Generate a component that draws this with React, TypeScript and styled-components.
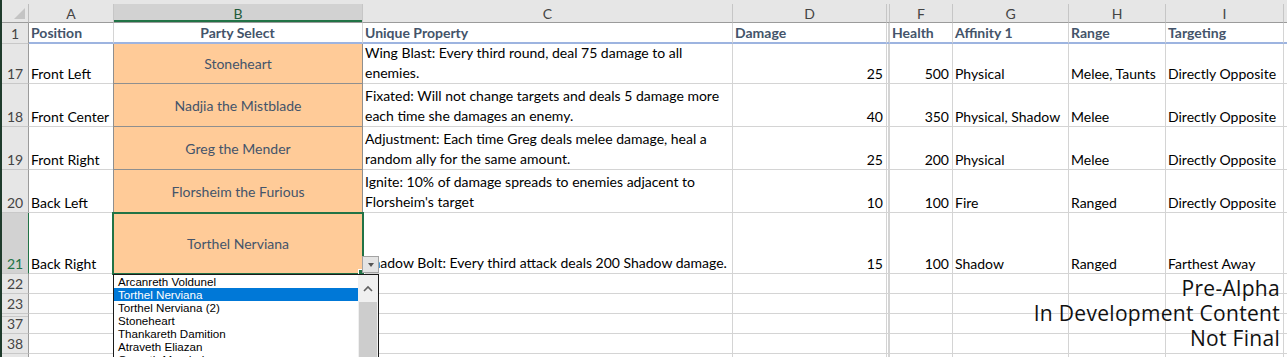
import React from "react";
import styled, { createGlobalStyle, css } from "styled-components";

const GlobalStyle = createGlobalStyle`
  html, body {
    margin: 0;
    padding: 0;
    background: #ffffff;
    overflow: hidden;
  }
  body {
    font-family: Lato, "Liberation Sans", sans-serif;
  }
`;

const GRID = "#d4d4d4";
const HEAD_BG = "#e6e6e6";
const HEAD_SEL = "#d2d2d2";
const GREEN = "#217346";
const PEACH = "#ffcb98";
const PEACH_LINE = "#8f8f8f";

const Sheet = styled.div`
  position: relative;
  width: 1285px;
  height: 357px;
  overflow: hidden;
  border-left: 2px solid #1f3b2c;
  display: grid;
  grid-template-columns: 27px 85px 249px 370px 154px 3px 63px 116px 97px 118px 1fr;
  grid-template-rows: 4px 19px 21px 40px 43px 43px 43px 61px 20px 20px 20px 20px 20px;
  font-size: 14px;
  color: #000;
`;

const TopStrip = styled.div`
  grid-column: 1 / -1;
  background: ${HEAD_BG};
`;

const Corner = styled.div`
  position: relative;
  background: ${HEAD_BG};
  border-right: 1px solid #bdbdbd;
  border-bottom: 1px solid #9b9b9b;
  &::after {
    content: "";
    position: absolute;
    right: 3px;
    bottom: 3px;
    border-style: solid;
    border-width: 0 0 11px 11px;
    border-color: transparent transparent #c4c4c4 transparent;
  }
`;

const ColHead = styled.div<{ $sel?: boolean }>`
  display: flex;
  align-items: center;
  justify-content: center;
  background: ${(p) => (p.$sel ? HEAD_SEL : HEAD_BG)};
  border-right: 1px solid #c6c6c6;
  border-bottom: 1px solid #9b9b9b;
  color: ${(p) => (p.$sel ? "#1f5b3a" : "#444444")};
  font-size: 14px;
  ${(p) =>
    p.$sel &&
    css`
      box-shadow: inset 0 -2px 0 ${GREEN};
    `}
`;

const RowHead = styled.div<{ $sel?: boolean; $gap?: boolean }>`
  display: flex;
  align-items: flex-end;
  justify-content: center;
  background: ${(p) => (p.$sel ? HEAD_SEL : HEAD_BG)};
  border-right: 1px solid ${(p) => (p.$sel ? GREEN : "#9b9b9b")};
  border-bottom: 1px solid #c8c8c8;
  color: ${(p) => (p.$sel ? GREEN : "#444444")};
  font-size: 14px;
  line-height: 19px;
  ${(p) =>
    p.$gap &&
    css`
      box-shadow: inset 0 2px 0 ${HEAD_BG}, inset 0 3px 0 #c8c8c8;
    `}
`;

const Cell = styled.div<{
  $align?: "left" | "right" | "center";
  $bold?: boolean;
  $freeze?: boolean;
}>`
  display: flex;
  align-items: flex-end;
  justify-content: ${(p) =>
    p.$align === "right" ? "flex-end" : p.$align === "center" ? "center" : "flex-start"};
  padding: 0 3px 0 2px;
  border-right: 1px solid ${GRID};
  border-bottom: ${(p) => (p.$freeze ? "2px solid #9db4e0" : `1px solid ${GRID}`)};
  white-space: nowrap;
  overflow: visible;
  line-height: 19px;
  font-weight: ${(p) => (p.$bold ? 700 : 400)};
  color: ${(p) => (p.$bold ? "#44546a" : "#000")};
`;

const Gap = styled.div<{ $freeze?: boolean }>`
  border-right: 1px solid ${GRID};
  border-bottom: ${(p) => (p.$freeze ? "2px solid #9db4e0" : `1px solid ${GRID}`)};
  box-shadow: inset 1px 0 0 #fff, inset 2px 0 0 ${GRID};
`;

const PartyCell = styled.div<{ $sel?: boolean }>`
  position: relative;
  display: flex;
  align-items: center;
  justify-content: center;
  background: ${PEACH};
  border-right: 1px solid ${PEACH_LINE};
  border-bottom: 1px solid ${PEACH_LINE};
  box-shadow: -1px 0 0 ${PEACH_LINE};
  color: #44546a;
  white-space: nowrap;
  ${(p) =>
    p.$sel &&
    css`
      &::after {
        content: "";
        position: absolute;
        left: -2px;
        top: -1px;
        right: -2px;
        bottom: -2px;
        border: 2px solid ${GREEN};
        pointer-events: none;
      }
    `}
`;

const Lines = styled.div`
  display: flex;
  flex-direction: column;
  line-height: 20px;
`;

const DropButton = styled.div`
  position: absolute;
  left: 100%;
  top: 43px;
  width: 17px;
  height: 17px;
  box-sizing: border-box;
  border: 1px solid #a3a3a3;
  background: #e4e4e4;
  display: flex;
  align-items: center;
  justify-content: center;
  z-index: 3;
  &::before {
    content: "";
    border-style: solid;
    border-width: 4px 3.5px 0 3.5px;
    border-color: #555 transparent transparent transparent;
  }
`;

const FillHandle = styled.div`
  position: absolute;
  right: -3px;
  bottom: -3px;
  width: 5px;
  height: 5px;
  background: ${GREEN};
  border: 1px solid #fff;
  z-index: 2;
`;

const DropList = styled.div`
  position: absolute;
  left: -1px;
  top: calc(100% + 1px);
  width: 266px;
  height: 110px;
  box-sizing: border-box;
  border: 1px solid #1a1a1a;
  background: #fff;
  display: flex;
  z-index: 5;
  font-family: "Liberation Sans", Arial, sans-serif;
  font-size: 11.6px;
  color: #000;
`;

const Items = styled.div`
  flex: 1;
  display: flex;
  flex-direction: column;
`;

const Item = styled.div<{ $active?: boolean }>`
  height: 13px;
  line-height: 13px;
  padding-left: 4px;
  background: ${(p) => (p.$active ? "#0078d7" : "transparent")};
  color: ${(p) => (p.$active ? "#fff" : "#000")};
  white-space: nowrap;
`;

const Scroll = styled.div`
  width: 20px;
  background: #f0f0f0;
  display: flex;
  flex-direction: column;
`;

const ScrollUp = styled.div`
  height: 27px;
  display: flex;
  align-items: center;
  justify-content: center;
`;

const Thumb = styled.div`
  flex: 1;
  margin: 0 1px;
  background: #cdcdcd;
`;

const Watermark = styled.div`
  position: absolute;
  right: 7px;
  top: 276px;
  text-align: right;
  font-family: "Open Sans", "Liberation Sans", sans-serif;
  font-size: 21px;
  letter-spacing: 0.3px;
  line-height: 25px;
  color: #111;
  z-index: 6;
`;

type Row = {
  n: number;
  pos: string;
  party: string;
  prop: string[];
  dmg: number;
  hp: number;
  aff: string;
  range: string;
  target: string;
  sel?: boolean;
};

const rows: Row[] = [
  {
    n: 17,
    pos: "Front Left",
    party: "Stoneheart",
    prop: ["Wing Blast: Every third round, deal 75 damage to all", "enemies."],
    dmg: 25,
    hp: 500,
    aff: "Physical",
    range: "Melee, Taunts",
    target: "Directly Opposite",
  },
  {
    n: 18,
    pos: "Front Center",
    party: "Nadjia the Mistblade",
    prop: [
      "Fixated: Will not change targets and deals 5 damage more",
      "each time she damages an enemy.",
    ],
    dmg: 40,
    hp: 350,
    aff: "Physical, Shadow",
    range: "Melee",
    target: "Directly Opposite",
  },
  {
    n: 19,
    pos: "Front Right",
    party: "Greg the Mender",
    prop: [
      "Adjustment: Each time Greg deals melee damage, heal a",
      "random ally for the same amount.",
    ],
    dmg: 25,
    hp: 200,
    aff: "Physical",
    range: "Melee",
    target: "Directly Opposite",
  },
  {
    n: 20,
    pos: "Back Left",
    party: "Florsheim the Furious",
    prop: ["Ignite: 10% of damage spreads to enemies adjacent to", "Florsheim's target"],
    dmg: 10,
    hp: 100,
    aff: "Fire",
    range: "Ranged",
    target: "Directly Opposite",
  },
  {
    n: 21,
    pos: "Back Right",
    party: "Torthel Nerviana",
    prop: ["Shadow Bolt: Every third attack deals 200 Shadow damage."],
    dmg: 15,
    hp: 100,
    aff: "Shadow",
    range: "Ranged",
    target: "Farthest Away",
    sel: true,
  },
];

const options = [
  "Arcanreth Voldunel",
  "Torthel Nerviana",
  "Torthel Nerviana (2)",
  "Stoneheart",
  "Thankareth Damition",
  "Atraveth Eliazan",
  "Gorvath Mandrel",
  "Nadjia the Mistblade",
];

const letters = ["A", "B", "C", "D", "", "F", "G", "H", "I", ""];
const emptyRows = [22, 23, 37, 38, 39];

function EmptyRow({ n }: { n: number }) {
  return (
    <>
      <RowHead $gap={n === 37}>{n}</RowHead>
      <Cell />
      <Cell />
      <Cell />
      <Cell />
      <Gap />
      <Cell />
      <Cell />
      <Cell />
      <Cell />
      <Cell />
    </>
  );
}

export default function App() {
  return (
    <>
      <GlobalStyle />
      <Sheet>
        <TopStrip />
        <Corner />
        {letters.map((l, i) => (
          <ColHead key={i} $sel={l === "B"}>
            {l}
          </ColHead>
        ))}

        <RowHead>1</RowHead>
        <Cell $bold $freeze>Position</Cell>
        <Cell $bold $freeze $align="center">Party Select</Cell>
        <Cell $bold $freeze>Unique Property</Cell>
        <Cell $bold $freeze>Damage</Cell>
        <Gap $freeze />
        <Cell $bold $freeze>Health</Cell>
        <Cell $bold $freeze>Affinity 1</Cell>
        <Cell $bold $freeze>Range</Cell>
        <Cell $bold $freeze>Targeting</Cell>
        <Cell $freeze />

        {rows.map((r) => (
          <React.Fragment key={r.n}>
            <RowHead $sel={r.sel}>{r.n}</RowHead>
            <Cell>{r.pos}</Cell>
            <PartyCell $sel={r.sel}>
              {r.party}
              {r.sel && (
                <>
                  <DropButton />
                  <FillHandle />
                  <DropList>
                    <Items>
                      {options.map((o) => (
                        <Item key={o} $active={o === r.party}>
                          {o}
                        </Item>
                      ))}
                    </Items>
                    <Scroll>
                      <ScrollUp>
                        <svg width="10" height="7" viewBox="0 0 10 7">
                          <polyline
                            points="1,6 5,2 9,6"
                            fill="none"
                            stroke="#606060"
                            strokeWidth="1.6"
                          />
                        </svg>
                      </ScrollUp>
                      <Thumb />
                    </Scroll>
                  </DropList>
                </>
              )}
            </PartyCell>
            <Cell>
              <Lines>
                {r.prop.map((line) => (
                  <span key={line}>{line}</span>
                ))}
              </Lines>
            </Cell>
            <Cell $align="right">{r.dmg}</Cell>
            <Gap />
            <Cell $align="right">{r.hp}</Cell>
            <Cell>{r.aff}</Cell>
            <Cell>{r.range}</Cell>
            <Cell>{r.target}</Cell>
            <Cell />
          </React.Fragment>
        ))}

        {emptyRows.map((n) => (
          <EmptyRow key={n} n={n} />
        ))}

        <Watermark>
          Pre-Alpha
          <br />
          In Development Content
          <br />
          Not Final
        </Watermark>
      </Sheet>
    </>
  );
}
